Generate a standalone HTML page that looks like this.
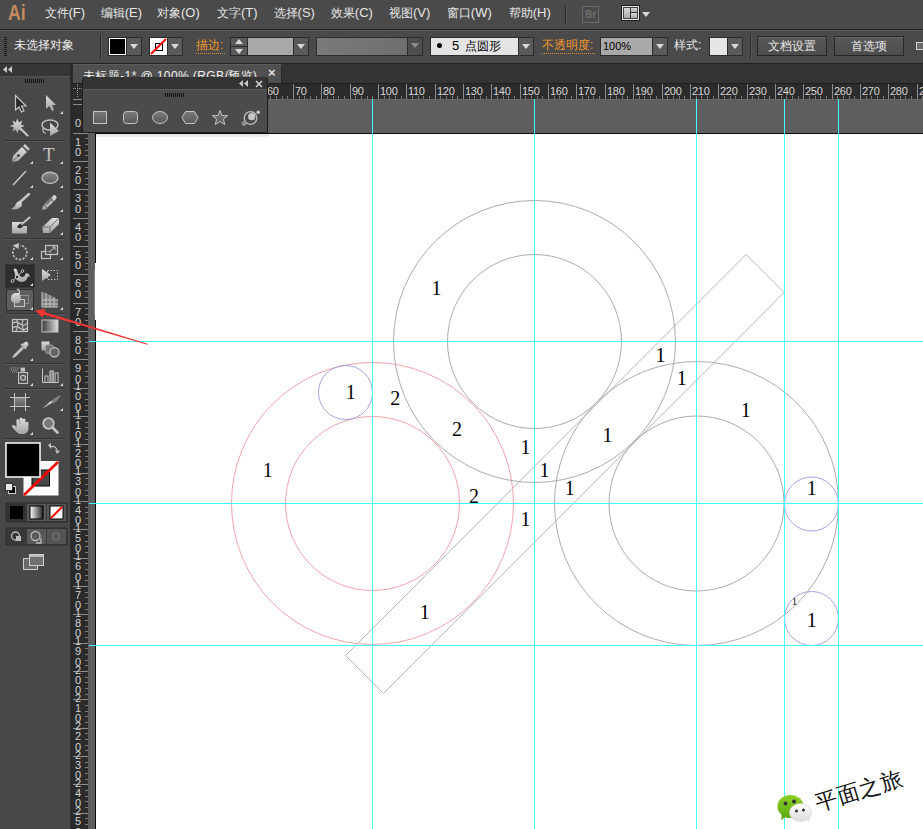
<!DOCTYPE html><html><head><meta charset="utf-8"><style>
html,body{margin:0;padding:0;width:923px;height:829px;overflow:hidden;background:#484848;font-family:"Liberation Sans",sans-serif;}
.ab{position:absolute;}
.mt{position:absolute;top:5px;font-size:12px;color:#e6e6e6;line-height:16px;white-space:nowrap;}
.ct{position:absolute;font-size:12px;line-height:16px;white-space:nowrap;}
.dd{position:absolute;top:37px;height:17px;width:14px;background:#5a5a5a;border:1px solid #2c2c2c;}
.dd:after{content:"";position:absolute;left:3px;top:6px;border-left:4px solid transparent;border-right:4px solid transparent;border-top:5px solid #d8d8d8;}
.tri{position:absolute;width:0;height:0;border-left:3px solid transparent;border-bottom:3px solid #d0d0d0;}
.sep{position:absolute;left:5px;width:60px;height:1px;background:#343434;border-bottom:1px solid #555;}
.btn{position:absolute;top:36px;height:18px;border:1px solid #262626;background:linear-gradient(#585858,#4c4c4c);box-shadow:inset 0 1px 0 #666;color:#e8e8e8;font-size:12px;line-height:19px;text-align:center;}
</style></head><body>
<div class="ab" style="left:0;top:0;width:923px;height:29px;background:#4a4a4a"></div>
<div class="ab" style="left:0;top:29px;width:923px;height:1px;background:#1f1f1f"></div>
<div class="ab" style="left:0;top:30px;width:923px;height:1px;background:#5d5d5d"></div>
<div class="ab" style="left:8px;top:1px;font-size:21.5px;font-weight:bold;color:#c48a5e;line-height:24px;letter-spacing:0px;transform:scaleX(0.82);transform-origin:0 0">Ai</div>
<div class="mt" style="left:44.5px">文件<span style="font-size:13px">(F)</span></div>
<div class="mt" style="left:100.7px">编辑<span style="font-size:13px">(E)</span></div>
<div class="mt" style="left:157px">对象<span style="font-size:13px">(O)</span></div>
<div class="mt" style="left:217px">文字<span style="font-size:13px">(T)</span></div>
<div class="mt" style="left:273.6px">选择<span style="font-size:13px">(S)</span></div>
<div class="mt" style="left:330.8px">效果<span style="font-size:13px">(C)</span></div>
<div class="mt" style="left:389px">视图<span style="font-size:13px">(V)</span></div>
<div class="mt" style="left:446.8px">窗口<span style="font-size:13px">(W)</span></div>
<div class="mt" style="left:508.7px">帮助<span style="font-size:13px">(H)</span></div>
<div class="ab" style="left:565px;top:5px;width:1px;height:19px;background:#2a2a2a;border-right:1px solid #5a5a5a"></div>
<div class="ab" style="left:582px;top:6px;width:15px;height:15px;border:1px solid #6a6a6a;color:#6e6e6e;font-size:10px;line-height:15px;text-align:center;font-weight:bold">Br</div>
<div class="ab" style="left:621px;top:5px;width:19px;height:16px;background:#1e1e1e"></div>
<div class="ab" style="left:622px;top:6px;width:17px;height:14px;background:#e4e4e4"></div>
<div class="ab" style="left:624px;top:8px;width:6px;height:10px;background:linear-gradient(#d8d8d8,#a8a8a8)"></div>
<div class="ab" style="left:631px;top:8px;width:6px;height:4px;background:linear-gradient(#d8d8d8,#b0b0b0)"></div>
<div class="ab" style="left:631px;top:13px;width:6px;height:5px;background:linear-gradient(#d8d8d8,#a8a8a8)"></div>
<div class="ab" style="left:630px;top:7px;width:1px;height:12px;background:#333"></div>
<div class="ab" style="left:631px;top:12px;width:7px;height:1px;background:#333"></div>
<div class="ab" style="left:623px;top:7px;width:15px;height:12px;box-shadow:inset 0 0 0 1px #444"></div>
<div class="ab" style="left:642px;top:12px;width:0;height:0;border-left:4px solid transparent;border-right:4px solid transparent;border-top:5px solid #d8d8d8"></div>
<div class="ab" style="left:0;top:31px;width:923px;height:32px;background:#4a4a4a"></div>
<div class="ab" style="left:0;top:63px;width:923px;height:1px;background:#1f1f1f"></div>
<div class="ab" style="left:4px;top:37px;width:3px;height:1px;background:#1a1a1a"></div>
<div class="ab" style="left:4px;top:39px;width:3px;height:1px;background:#1a1a1a"></div>
<div class="ab" style="left:4px;top:41px;width:3px;height:1px;background:#1a1a1a"></div>
<div class="ab" style="left:4px;top:43px;width:3px;height:1px;background:#1a1a1a"></div>
<div class="ab" style="left:4px;top:45px;width:3px;height:1px;background:#1a1a1a"></div>
<div class="ab" style="left:4px;top:47px;width:3px;height:1px;background:#1a1a1a"></div>
<div class="ab" style="left:4px;top:49px;width:3px;height:1px;background:#1a1a1a"></div>
<div class="ab" style="left:4px;top:51px;width:3px;height:1px;background:#1a1a1a"></div>
<div class="ab" style="left:4px;top:53px;width:3px;height:1px;background:#1a1a1a"></div>
<div class="ab" style="left:4px;top:55px;width:3px;height:1px;background:#1a1a1a"></div>
<div class="ct" style="left:14px;top:37px;color:#ececec">未选择对象</div>
<div class="ab" style="left:100px;top:34px;width:1px;height:25px;background:#2e2e2e;border-right:1px solid #5a5a5a"></div>
<div class="ab" style="left:108px;top:37px;width:17px;height:17px;background:#000;border:1px solid #2a2a2a;box-shadow:inset 0 0 0 1px #fff"></div>
<div class="dd" style="left:126px"></div>
<div class="ab" style="left:149px;top:37px;width:17px;height:17px;background:#fff;border:1px solid #2a2a2a;overflow:hidden"><div class="ab" style="left:5px;top:5px;width:6px;height:6px;border:1px solid #000"></div><svg class="ab" style="left:0;top:0" width="17" height="17"><line x1="1" y1="16" x2="16" y2="1" stroke="#f00" stroke-width="2"/></svg></div>
<div class="dd" style="left:167px"></div>
<div class="ct" style="left:196px;top:37px;color:#f4962a">描边:</div>
<div class="ab" style="left:196px;top:53px;width:29px;height:0;border-top:1px dotted #e08a2a"></div>
<div class="ab" style="left:230px;top:37px;width:77px;height:17px;border:1px solid #262626;background:#a8a8a8"></div>
<div class="ab" style="left:231px;top:38px;width:16px;height:8px;background:#5a5a5a;border-bottom:1px solid #2a2a2a"></div>
<div class="ab" style="left:231px;top:47px;width:16px;height:8px;background:#5a5a5a"></div>
<div class="ab" style="left:235px;top:39px;width:0;height:0;border-left:4px solid transparent;border-right:4px solid transparent;border-bottom:5px solid #d8d8d8"></div>
<div class="ab" style="left:235px;top:49px;width:0;height:0;border-left:4px solid transparent;border-right:4px solid transparent;border-top:5px solid #d8d8d8"></div>
<div class="ab" style="left:247px;top:38px;width:1px;height:17px;background:#2a2a2a"></div>
<div class="dd" style="left:293px"></div>
<div class="ab" style="left:316px;top:37px;width:90px;height:17px;border:1px solid #2c2c2c;background:linear-gradient(90deg,#7a7a7a,#6e6e6e)"></div>
<div class="ab" style="left:407px;top:37px;height:17px;width:14px;background:#4e4e4e;border:1px solid #2c2c2c"></div><div class="ab" style="left:411px;top:43px;width:0;height:0;border-left:4px solid transparent;border-right:4px solid transparent;border-top:5px solid #8a8a8a"></div>
<div class="ab" style="left:430px;top:37px;width:87px;height:17px;border:1px solid #2c2c2c;background:#e4e4e4"></div>
<div class="ab" style="left:437px;top:43px;width:5px;height:5px;border-radius:50%;background:#000"></div>
<div class="ct" style="left:452px;top:38px;color:#000;font-size:13px">5</div>
<div class="ct" style="left:465px;top:38px;color:#000;font-size:12px">点圆形</div>
<div class="dd" style="left:518px"></div>
<div class="ct" style="left:542px;top:37px;color:#f4962a">不透明度:</div>
<div class="ab" style="left:542px;top:53px;width:53px;height:0;border-top:1px dotted #e08a2a"></div>
<div class="ab" style="left:600px;top:37px;width:51px;height:17px;border:1px solid #2c2c2c;background:#a9a9a9"></div>
<div class="ct" style="left:603px;top:38px;color:#000;font-size:11px">100%</div>
<div class="dd" style="left:652px"></div>
<div class="ct" style="left:674px;top:37px;color:#e8e8e8">样式:</div>
<div class="ab" style="left:709px;top:37px;width:17px;height:17px;border:1px solid #2c2c2c;background:#e6e6e6"></div>
<div class="dd" style="left:727px"></div>
<div class="ab" style="left:750px;top:34px;width:1px;height:25px;background:#2e2e2e;border-right:1px solid #5a5a5a"></div>
<div class="btn" style="left:757px;width:68px">文档设置</div>
<div class="btn" style="left:834px;width:68px">首选项</div>
<div class="ab" style="left:916px;top:42px;width:9px;height:8px;border:1px solid #d0d0d0;background:#6a6a6a;box-sizing:border-box"></div>
<div class="ab" style="left:0;top:64px;width:70px;height:765px;background:#484848"></div>
<div class="ab" style="left:0;top:64px;width:70px;height:12px;background:#363636;border-bottom:1px solid #555"></div>
<div class="ab" style="left:70px;top:64px;width:3px;height:765px;background:#2a2a2a"></div>
<svg class="ab" style="left:3px;top:66px" width="10" height="8"><path d="M4 0 L0 3.5 L4 7 Z M9 0 L5 3.5 L9 7 Z" fill="#c8c8c8"/></svg>
<div class="ab" style="left:25px;top:79px;width:1px;height:4px;background:#111"></div>
<div class="ab" style="left:27px;top:79px;width:1px;height:4px;background:#111"></div>
<div class="ab" style="left:29px;top:79px;width:1px;height:4px;background:#111"></div>
<div class="ab" style="left:31px;top:79px;width:1px;height:4px;background:#111"></div>
<div class="ab" style="left:33px;top:79px;width:1px;height:4px;background:#111"></div>
<div class="ab" style="left:35px;top:79px;width:1px;height:4px;background:#111"></div>
<div class="ab" style="left:37px;top:79px;width:1px;height:4px;background:#111"></div>
<div class="ab" style="left:39px;top:79px;width:1px;height:4px;background:#111"></div>
<div class="ab" style="left:41px;top:79px;width:1px;height:4px;background:#111"></div>
<div class="ab" style="left:43px;top:79px;width:1px;height:4px;background:#111"></div>
<div class="ab" style="left:73px;top:64px;width:850px;height:19px;background:#343434"></div>
<div class="ab" style="left:73px;top:64px;width:209px;height:19px;background:#4f4f4f;border-top:1px solid #5c5c5c;border-right:1px solid #2a2a2a;box-sizing:border-box"></div>
<div class="ct" style="left:83px;top:68px;color:#f0f0f0;letter-spacing:0.4px">未标题-1* @ 100% (RGB/预览)</div>
<div class="ab" style="left:268px;top:66px;color:#e0e0e0;font-size:13px;font-weight:bold;line-height:14px">×</div>
<div class="ab" style="left:73px;top:83px;width:850px;height:16px;background:#2b2b2b;border-top:1px solid #1e1e1e;box-sizing:border-box"></div>
<div class="ab" style="left:73px;top:99px;width:15px;height:730px;background:#2b2b2b"></div>
<div class="ab" style="left:88px;top:99px;width:835px;height:34px;background:#5e5e5e;border-top:1px solid #686868;box-sizing:border-box"></div>
<div class="ab" style="left:88px;top:133px;width:7px;height:696px;background:#5e5e5e"></div>
<div class="ab" style="left:95px;top:133px;width:828px;height:696px;background:#0c0c0c"></div>
<div class="ab" style="left:96px;top:134px;width:827px;height:695px;background:#ffffff"></div>
<div class="ab" style="left:96px;top:134px;width:173px;height:4px;background:linear-gradient(#dcdcdc,#ffffff)"></div>
<div class="ab" style="left:95px;top:263px;width:1px;height:57px;background:#fff"></div><div class="ab" style="left:94px;top:270px;width:1px;height:45px;background:#8a8a8a"></div>
<div class="ab" style="left:89px;top:96px;width:1px;height:3px;background:#7a7a7a"></div>
<div class="ab" style="left:95px;top:84px;width:1px;height:15px;background:#8c8c8c"></div>
<div class="ab" style="left:97px;top:85px;font-size:11px;line-height:13px;color:#d6d6d6;letter-spacing:-0.3px">0</div>
<div class="ab" style="left:100px;top:96px;width:1px;height:3px;background:#7a7a7a"></div>
<div class="ab" style="left:106px;top:96px;width:1px;height:3px;background:#7a7a7a"></div>
<div class="ab" style="left:112px;top:96px;width:1px;height:3px;background:#7a7a7a"></div>
<div class="ab" style="left:117px;top:96px;width:1px;height:3px;background:#7a7a7a"></div>
<div class="ab" style="left:123px;top:84px;width:1px;height:15px;background:#8c8c8c"></div>
<div class="ab" style="left:125px;top:85px;font-size:11px;line-height:13px;color:#d6d6d6;letter-spacing:-0.3px">10</div>
<div class="ab" style="left:129px;top:96px;width:1px;height:3px;background:#7a7a7a"></div>
<div class="ab" style="left:134px;top:96px;width:1px;height:3px;background:#7a7a7a"></div>
<div class="ab" style="left:140px;top:96px;width:1px;height:3px;background:#7a7a7a"></div>
<div class="ab" style="left:146px;top:96px;width:1px;height:3px;background:#7a7a7a"></div>
<div class="ab" style="left:151px;top:84px;width:1px;height:15px;background:#8c8c8c"></div>
<div class="ab" style="left:153px;top:85px;font-size:11px;line-height:13px;color:#d6d6d6;letter-spacing:-0.3px">20</div>
<div class="ab" style="left:157px;top:96px;width:1px;height:3px;background:#7a7a7a"></div>
<div class="ab" style="left:163px;top:96px;width:1px;height:3px;background:#7a7a7a"></div>
<div class="ab" style="left:168px;top:96px;width:1px;height:3px;background:#7a7a7a"></div>
<div class="ab" style="left:174px;top:96px;width:1px;height:3px;background:#7a7a7a"></div>
<div class="ab" style="left:180px;top:84px;width:1px;height:15px;background:#8c8c8c"></div>
<div class="ab" style="left:182px;top:85px;font-size:11px;line-height:13px;color:#d6d6d6;letter-spacing:-0.3px">30</div>
<div class="ab" style="left:185px;top:96px;width:1px;height:3px;background:#7a7a7a"></div>
<div class="ab" style="left:191px;top:96px;width:1px;height:3px;background:#7a7a7a"></div>
<div class="ab" style="left:197px;top:96px;width:1px;height:3px;background:#7a7a7a"></div>
<div class="ab" style="left:202px;top:96px;width:1px;height:3px;background:#7a7a7a"></div>
<div class="ab" style="left:208px;top:84px;width:1px;height:15px;background:#8c8c8c"></div>
<div class="ab" style="left:210px;top:85px;font-size:11px;line-height:13px;color:#d6d6d6;letter-spacing:-0.3px">40</div>
<div class="ab" style="left:214px;top:96px;width:1px;height:3px;background:#7a7a7a"></div>
<div class="ab" style="left:219px;top:96px;width:1px;height:3px;background:#7a7a7a"></div>
<div class="ab" style="left:225px;top:96px;width:1px;height:3px;background:#7a7a7a"></div>
<div class="ab" style="left:231px;top:96px;width:1px;height:3px;background:#7a7a7a"></div>
<div class="ab" style="left:236px;top:84px;width:1px;height:15px;background:#8c8c8c"></div>
<div class="ab" style="left:238px;top:85px;font-size:11px;line-height:13px;color:#d6d6d6;letter-spacing:-0.3px">50</div>
<div class="ab" style="left:242px;top:96px;width:1px;height:3px;background:#7a7a7a"></div>
<div class="ab" style="left:248px;top:96px;width:1px;height:3px;background:#7a7a7a"></div>
<div class="ab" style="left:253px;top:96px;width:1px;height:3px;background:#7a7a7a"></div>
<div class="ab" style="left:259px;top:96px;width:1px;height:3px;background:#7a7a7a"></div>
<div class="ab" style="left:265px;top:84px;width:1px;height:15px;background:#8c8c8c"></div>
<div class="ab" style="left:267px;top:85px;font-size:11px;line-height:13px;color:#d6d6d6;letter-spacing:-0.3px">60</div>
<div class="ab" style="left:270px;top:96px;width:1px;height:3px;background:#7a7a7a"></div>
<div class="ab" style="left:276px;top:96px;width:1px;height:3px;background:#7a7a7a"></div>
<div class="ab" style="left:282px;top:96px;width:1px;height:3px;background:#7a7a7a"></div>
<div class="ab" style="left:287px;top:96px;width:1px;height:3px;background:#7a7a7a"></div>
<div class="ab" style="left:293px;top:84px;width:1px;height:15px;background:#8c8c8c"></div>
<div class="ab" style="left:295px;top:85px;font-size:11px;line-height:13px;color:#d6d6d6;letter-spacing:-0.3px">70</div>
<div class="ab" style="left:299px;top:96px;width:1px;height:3px;background:#7a7a7a"></div>
<div class="ab" style="left:304px;top:96px;width:1px;height:3px;background:#7a7a7a"></div>
<div class="ab" style="left:310px;top:96px;width:1px;height:3px;background:#7a7a7a"></div>
<div class="ab" style="left:316px;top:96px;width:1px;height:3px;background:#7a7a7a"></div>
<div class="ab" style="left:321px;top:84px;width:1px;height:15px;background:#8c8c8c"></div>
<div class="ab" style="left:323px;top:85px;font-size:11px;line-height:13px;color:#d6d6d6;letter-spacing:-0.3px">80</div>
<div class="ab" style="left:327px;top:96px;width:1px;height:3px;background:#7a7a7a"></div>
<div class="ab" style="left:333px;top:96px;width:1px;height:3px;background:#7a7a7a"></div>
<div class="ab" style="left:338px;top:96px;width:1px;height:3px;background:#7a7a7a"></div>
<div class="ab" style="left:344px;top:96px;width:1px;height:3px;background:#7a7a7a"></div>
<div class="ab" style="left:350px;top:84px;width:1px;height:15px;background:#8c8c8c"></div>
<div class="ab" style="left:352px;top:85px;font-size:11px;line-height:13px;color:#d6d6d6;letter-spacing:-0.3px">90</div>
<div class="ab" style="left:355px;top:96px;width:1px;height:3px;background:#7a7a7a"></div>
<div class="ab" style="left:361px;top:96px;width:1px;height:3px;background:#7a7a7a"></div>
<div class="ab" style="left:367px;top:96px;width:1px;height:3px;background:#7a7a7a"></div>
<div class="ab" style="left:372px;top:96px;width:1px;height:3px;background:#7a7a7a"></div>
<div class="ab" style="left:378px;top:84px;width:1px;height:15px;background:#8c8c8c"></div>
<div class="ab" style="left:380px;top:85px;font-size:11px;line-height:13px;color:#d6d6d6;letter-spacing:-0.3px">100</div>
<div class="ab" style="left:384px;top:96px;width:1px;height:3px;background:#7a7a7a"></div>
<div class="ab" style="left:389px;top:96px;width:1px;height:3px;background:#7a7a7a"></div>
<div class="ab" style="left:395px;top:96px;width:1px;height:3px;background:#7a7a7a"></div>
<div class="ab" style="left:401px;top:96px;width:1px;height:3px;background:#7a7a7a"></div>
<div class="ab" style="left:406px;top:84px;width:1px;height:15px;background:#8c8c8c"></div>
<div class="ab" style="left:408px;top:85px;font-size:11px;line-height:13px;color:#d6d6d6;letter-spacing:-0.3px">110</div>
<div class="ab" style="left:412px;top:96px;width:1px;height:3px;background:#7a7a7a"></div>
<div class="ab" style="left:418px;top:96px;width:1px;height:3px;background:#7a7a7a"></div>
<div class="ab" style="left:423px;top:96px;width:1px;height:3px;background:#7a7a7a"></div>
<div class="ab" style="left:429px;top:96px;width:1px;height:3px;background:#7a7a7a"></div>
<div class="ab" style="left:435px;top:84px;width:1px;height:15px;background:#8c8c8c"></div>
<div class="ab" style="left:437px;top:85px;font-size:11px;line-height:13px;color:#d6d6d6;letter-spacing:-0.3px">120</div>
<div class="ab" style="left:440px;top:96px;width:1px;height:3px;background:#7a7a7a"></div>
<div class="ab" style="left:446px;top:96px;width:1px;height:3px;background:#7a7a7a"></div>
<div class="ab" style="left:452px;top:96px;width:1px;height:3px;background:#7a7a7a"></div>
<div class="ab" style="left:457px;top:96px;width:1px;height:3px;background:#7a7a7a"></div>
<div class="ab" style="left:463px;top:84px;width:1px;height:15px;background:#8c8c8c"></div>
<div class="ab" style="left:465px;top:85px;font-size:11px;line-height:13px;color:#d6d6d6;letter-spacing:-0.3px">130</div>
<div class="ab" style="left:469px;top:96px;width:1px;height:3px;background:#7a7a7a"></div>
<div class="ab" style="left:474px;top:96px;width:1px;height:3px;background:#7a7a7a"></div>
<div class="ab" style="left:480px;top:96px;width:1px;height:3px;background:#7a7a7a"></div>
<div class="ab" style="left:486px;top:96px;width:1px;height:3px;background:#7a7a7a"></div>
<div class="ab" style="left:491px;top:84px;width:1px;height:15px;background:#8c8c8c"></div>
<div class="ab" style="left:493px;top:85px;font-size:11px;line-height:13px;color:#d6d6d6;letter-spacing:-0.3px">140</div>
<div class="ab" style="left:497px;top:96px;width:1px;height:3px;background:#7a7a7a"></div>
<div class="ab" style="left:503px;top:96px;width:1px;height:3px;background:#7a7a7a"></div>
<div class="ab" style="left:508px;top:96px;width:1px;height:3px;background:#7a7a7a"></div>
<div class="ab" style="left:514px;top:96px;width:1px;height:3px;background:#7a7a7a"></div>
<div class="ab" style="left:520px;top:84px;width:1px;height:15px;background:#8c8c8c"></div>
<div class="ab" style="left:522px;top:85px;font-size:11px;line-height:13px;color:#d6d6d6;letter-spacing:-0.3px">150</div>
<div class="ab" style="left:525px;top:96px;width:1px;height:3px;background:#7a7a7a"></div>
<div class="ab" style="left:531px;top:96px;width:1px;height:3px;background:#7a7a7a"></div>
<div class="ab" style="left:537px;top:96px;width:1px;height:3px;background:#7a7a7a"></div>
<div class="ab" style="left:542px;top:96px;width:1px;height:3px;background:#7a7a7a"></div>
<div class="ab" style="left:548px;top:84px;width:1px;height:15px;background:#8c8c8c"></div>
<div class="ab" style="left:550px;top:85px;font-size:11px;line-height:13px;color:#d6d6d6;letter-spacing:-0.3px">160</div>
<div class="ab" style="left:554px;top:96px;width:1px;height:3px;background:#7a7a7a"></div>
<div class="ab" style="left:559px;top:96px;width:1px;height:3px;background:#7a7a7a"></div>
<div class="ab" style="left:565px;top:96px;width:1px;height:3px;background:#7a7a7a"></div>
<div class="ab" style="left:571px;top:96px;width:1px;height:3px;background:#7a7a7a"></div>
<div class="ab" style="left:576px;top:84px;width:1px;height:15px;background:#8c8c8c"></div>
<div class="ab" style="left:578px;top:85px;font-size:11px;line-height:13px;color:#d6d6d6;letter-spacing:-0.3px">170</div>
<div class="ab" style="left:582px;top:96px;width:1px;height:3px;background:#7a7a7a"></div>
<div class="ab" style="left:588px;top:96px;width:1px;height:3px;background:#7a7a7a"></div>
<div class="ab" style="left:593px;top:96px;width:1px;height:3px;background:#7a7a7a"></div>
<div class="ab" style="left:599px;top:96px;width:1px;height:3px;background:#7a7a7a"></div>
<div class="ab" style="left:605px;top:84px;width:1px;height:15px;background:#8c8c8c"></div>
<div class="ab" style="left:607px;top:85px;font-size:11px;line-height:13px;color:#d6d6d6;letter-spacing:-0.3px">180</div>
<div class="ab" style="left:610px;top:96px;width:1px;height:3px;background:#7a7a7a"></div>
<div class="ab" style="left:616px;top:96px;width:1px;height:3px;background:#7a7a7a"></div>
<div class="ab" style="left:622px;top:96px;width:1px;height:3px;background:#7a7a7a"></div>
<div class="ab" style="left:627px;top:96px;width:1px;height:3px;background:#7a7a7a"></div>
<div class="ab" style="left:633px;top:84px;width:1px;height:15px;background:#8c8c8c"></div>
<div class="ab" style="left:635px;top:85px;font-size:11px;line-height:13px;color:#d6d6d6;letter-spacing:-0.3px">190</div>
<div class="ab" style="left:639px;top:96px;width:1px;height:3px;background:#7a7a7a"></div>
<div class="ab" style="left:644px;top:96px;width:1px;height:3px;background:#7a7a7a"></div>
<div class="ab" style="left:650px;top:96px;width:1px;height:3px;background:#7a7a7a"></div>
<div class="ab" style="left:656px;top:96px;width:1px;height:3px;background:#7a7a7a"></div>
<div class="ab" style="left:662px;top:84px;width:1px;height:15px;background:#8c8c8c"></div>
<div class="ab" style="left:664px;top:85px;font-size:11px;line-height:13px;color:#d6d6d6;letter-spacing:-0.3px">200</div>
<div class="ab" style="left:667px;top:96px;width:1px;height:3px;background:#7a7a7a"></div>
<div class="ab" style="left:673px;top:96px;width:1px;height:3px;background:#7a7a7a"></div>
<div class="ab" style="left:679px;top:96px;width:1px;height:3px;background:#7a7a7a"></div>
<div class="ab" style="left:684px;top:96px;width:1px;height:3px;background:#7a7a7a"></div>
<div class="ab" style="left:690px;top:84px;width:1px;height:15px;background:#8c8c8c"></div>
<div class="ab" style="left:692px;top:85px;font-size:11px;line-height:13px;color:#d6d6d6;letter-spacing:-0.3px">210</div>
<div class="ab" style="left:696px;top:96px;width:1px;height:3px;background:#7a7a7a"></div>
<div class="ab" style="left:701px;top:96px;width:1px;height:3px;background:#7a7a7a"></div>
<div class="ab" style="left:707px;top:96px;width:1px;height:3px;background:#7a7a7a"></div>
<div class="ab" style="left:713px;top:96px;width:1px;height:3px;background:#7a7a7a"></div>
<div class="ab" style="left:718px;top:84px;width:1px;height:15px;background:#8c8c8c"></div>
<div class="ab" style="left:720px;top:85px;font-size:11px;line-height:13px;color:#d6d6d6;letter-spacing:-0.3px">220</div>
<div class="ab" style="left:724px;top:96px;width:1px;height:3px;background:#7a7a7a"></div>
<div class="ab" style="left:730px;top:96px;width:1px;height:3px;background:#7a7a7a"></div>
<div class="ab" style="left:735px;top:96px;width:1px;height:3px;background:#7a7a7a"></div>
<div class="ab" style="left:741px;top:96px;width:1px;height:3px;background:#7a7a7a"></div>
<div class="ab" style="left:747px;top:84px;width:1px;height:15px;background:#8c8c8c"></div>
<div class="ab" style="left:749px;top:85px;font-size:11px;line-height:13px;color:#d6d6d6;letter-spacing:-0.3px">230</div>
<div class="ab" style="left:752px;top:96px;width:1px;height:3px;background:#7a7a7a"></div>
<div class="ab" style="left:758px;top:96px;width:1px;height:3px;background:#7a7a7a"></div>
<div class="ab" style="left:764px;top:96px;width:1px;height:3px;background:#7a7a7a"></div>
<div class="ab" style="left:769px;top:96px;width:1px;height:3px;background:#7a7a7a"></div>
<div class="ab" style="left:775px;top:84px;width:1px;height:15px;background:#8c8c8c"></div>
<div class="ab" style="left:777px;top:85px;font-size:11px;line-height:13px;color:#d6d6d6;letter-spacing:-0.3px">240</div>
<div class="ab" style="left:781px;top:96px;width:1px;height:3px;background:#7a7a7a"></div>
<div class="ab" style="left:786px;top:96px;width:1px;height:3px;background:#7a7a7a"></div>
<div class="ab" style="left:792px;top:96px;width:1px;height:3px;background:#7a7a7a"></div>
<div class="ab" style="left:798px;top:96px;width:1px;height:3px;background:#7a7a7a"></div>
<div class="ab" style="left:803px;top:84px;width:1px;height:15px;background:#8c8c8c"></div>
<div class="ab" style="left:805px;top:85px;font-size:11px;line-height:13px;color:#d6d6d6;letter-spacing:-0.3px">250</div>
<div class="ab" style="left:809px;top:96px;width:1px;height:3px;background:#7a7a7a"></div>
<div class="ab" style="left:815px;top:96px;width:1px;height:3px;background:#7a7a7a"></div>
<div class="ab" style="left:820px;top:96px;width:1px;height:3px;background:#7a7a7a"></div>
<div class="ab" style="left:826px;top:96px;width:1px;height:3px;background:#7a7a7a"></div>
<div class="ab" style="left:832px;top:84px;width:1px;height:15px;background:#8c8c8c"></div>
<div class="ab" style="left:834px;top:85px;font-size:11px;line-height:13px;color:#d6d6d6;letter-spacing:-0.3px">260</div>
<div class="ab" style="left:837px;top:96px;width:1px;height:3px;background:#7a7a7a"></div>
<div class="ab" style="left:843px;top:96px;width:1px;height:3px;background:#7a7a7a"></div>
<div class="ab" style="left:849px;top:96px;width:1px;height:3px;background:#7a7a7a"></div>
<div class="ab" style="left:854px;top:96px;width:1px;height:3px;background:#7a7a7a"></div>
<div class="ab" style="left:860px;top:84px;width:1px;height:15px;background:#8c8c8c"></div>
<div class="ab" style="left:862px;top:85px;font-size:11px;line-height:13px;color:#d6d6d6;letter-spacing:-0.3px">270</div>
<div class="ab" style="left:866px;top:96px;width:1px;height:3px;background:#7a7a7a"></div>
<div class="ab" style="left:871px;top:96px;width:1px;height:3px;background:#7a7a7a"></div>
<div class="ab" style="left:877px;top:96px;width:1px;height:3px;background:#7a7a7a"></div>
<div class="ab" style="left:883px;top:96px;width:1px;height:3px;background:#7a7a7a"></div>
<div class="ab" style="left:888px;top:84px;width:1px;height:15px;background:#8c8c8c"></div>
<div class="ab" style="left:890px;top:85px;font-size:11px;line-height:13px;color:#d6d6d6;letter-spacing:-0.3px">280</div>
<div class="ab" style="left:894px;top:96px;width:1px;height:3px;background:#7a7a7a"></div>
<div class="ab" style="left:900px;top:96px;width:1px;height:3px;background:#7a7a7a"></div>
<div class="ab" style="left:905px;top:96px;width:1px;height:3px;background:#7a7a7a"></div>
<div class="ab" style="left:911px;top:96px;width:1px;height:3px;background:#7a7a7a"></div>
<div class="ab" style="left:917px;top:84px;width:1px;height:15px;background:#8c8c8c"></div>
<div class="ab" style="left:919px;top:85px;font-size:11px;line-height:13px;color:#d6d6d6;letter-spacing:-0.3px">290</div>
<div class="ab" style="left:922px;top:96px;width:1px;height:3px;background:#7a7a7a"></div>
<div class="ab" style="left:85px;top:99px;width:3px;height:1px;background:#7a7a7a"></div>
<div class="ab" style="left:73px;top:104px;width:15px;height:1px;background:#8c8c8c"></div>
<div class="ab" style="left:85px;top:110px;width:3px;height:1px;background:#7a7a7a"></div>
<div class="ab" style="left:85px;top:116px;width:3px;height:1px;background:#7a7a7a"></div>
<div class="ab" style="left:85px;top:121px;width:3px;height:1px;background:#7a7a7a"></div>
<div class="ab" style="left:85px;top:127px;width:3px;height:1px;background:#7a7a7a"></div>
<div class="ab" style="left:73px;top:133px;width:15px;height:1px;background:#8c8c8c"></div>
<div class="ab" style="left:85px;top:138px;width:3px;height:1px;background:#7a7a7a"></div>
<div class="ab" style="left:85px;top:144px;width:3px;height:1px;background:#7a7a7a"></div>
<div class="ab" style="left:85px;top:150px;width:3px;height:1px;background:#7a7a7a"></div>
<div class="ab" style="left:85px;top:155px;width:3px;height:1px;background:#7a7a7a"></div>
<div class="ab" style="left:73px;top:161px;width:15px;height:1px;background:#8c8c8c"></div>
<div class="ab" style="left:85px;top:167px;width:3px;height:1px;background:#7a7a7a"></div>
<div class="ab" style="left:85px;top:172px;width:3px;height:1px;background:#7a7a7a"></div>
<div class="ab" style="left:85px;top:178px;width:3px;height:1px;background:#7a7a7a"></div>
<div class="ab" style="left:85px;top:184px;width:3px;height:1px;background:#7a7a7a"></div>
<div class="ab" style="left:73px;top:189px;width:15px;height:1px;background:#8c8c8c"></div>
<div class="ab" style="left:85px;top:195px;width:3px;height:1px;background:#7a7a7a"></div>
<div class="ab" style="left:85px;top:201px;width:3px;height:1px;background:#7a7a7a"></div>
<div class="ab" style="left:85px;top:206px;width:3px;height:1px;background:#7a7a7a"></div>
<div class="ab" style="left:85px;top:212px;width:3px;height:1px;background:#7a7a7a"></div>
<div class="ab" style="left:73px;top:218px;width:15px;height:1px;background:#8c8c8c"></div>
<div class="ab" style="left:85px;top:223px;width:3px;height:1px;background:#7a7a7a"></div>
<div class="ab" style="left:85px;top:229px;width:3px;height:1px;background:#7a7a7a"></div>
<div class="ab" style="left:85px;top:235px;width:3px;height:1px;background:#7a7a7a"></div>
<div class="ab" style="left:85px;top:240px;width:3px;height:1px;background:#7a7a7a"></div>
<div class="ab" style="left:73px;top:246px;width:15px;height:1px;background:#8c8c8c"></div>
<div class="ab" style="left:85px;top:252px;width:3px;height:1px;background:#7a7a7a"></div>
<div class="ab" style="left:85px;top:257px;width:3px;height:1px;background:#7a7a7a"></div>
<div class="ab" style="left:85px;top:263px;width:3px;height:1px;background:#7a7a7a"></div>
<div class="ab" style="left:85px;top:269px;width:3px;height:1px;background:#7a7a7a"></div>
<div class="ab" style="left:73px;top:274px;width:15px;height:1px;background:#8c8c8c"></div>
<div class="ab" style="left:85px;top:280px;width:3px;height:1px;background:#7a7a7a"></div>
<div class="ab" style="left:85px;top:286px;width:3px;height:1px;background:#7a7a7a"></div>
<div class="ab" style="left:85px;top:291px;width:3px;height:1px;background:#7a7a7a"></div>
<div class="ab" style="left:85px;top:297px;width:3px;height:1px;background:#7a7a7a"></div>
<div class="ab" style="left:73px;top:303px;width:15px;height:1px;background:#8c8c8c"></div>
<div class="ab" style="left:85px;top:308px;width:3px;height:1px;background:#7a7a7a"></div>
<div class="ab" style="left:85px;top:314px;width:3px;height:1px;background:#7a7a7a"></div>
<div class="ab" style="left:85px;top:320px;width:3px;height:1px;background:#7a7a7a"></div>
<div class="ab" style="left:85px;top:325px;width:3px;height:1px;background:#7a7a7a"></div>
<div class="ab" style="left:73px;top:331px;width:15px;height:1px;background:#8c8c8c"></div>
<div class="ab" style="left:85px;top:337px;width:3px;height:1px;background:#7a7a7a"></div>
<div class="ab" style="left:85px;top:342px;width:3px;height:1px;background:#7a7a7a"></div>
<div class="ab" style="left:85px;top:348px;width:3px;height:1px;background:#7a7a7a"></div>
<div class="ab" style="left:85px;top:354px;width:3px;height:1px;background:#7a7a7a"></div>
<div class="ab" style="left:73px;top:359px;width:15px;height:1px;background:#8c8c8c"></div>
<div class="ab" style="left:85px;top:365px;width:3px;height:1px;background:#7a7a7a"></div>
<div class="ab" style="left:85px;top:371px;width:3px;height:1px;background:#7a7a7a"></div>
<div class="ab" style="left:85px;top:376px;width:3px;height:1px;background:#7a7a7a"></div>
<div class="ab" style="left:85px;top:382px;width:3px;height:1px;background:#7a7a7a"></div>
<div class="ab" style="left:73px;top:388px;width:15px;height:1px;background:#8c8c8c"></div>
<div class="ab" style="left:85px;top:393px;width:3px;height:1px;background:#7a7a7a"></div>
<div class="ab" style="left:85px;top:399px;width:3px;height:1px;background:#7a7a7a"></div>
<div class="ab" style="left:85px;top:405px;width:3px;height:1px;background:#7a7a7a"></div>
<div class="ab" style="left:85px;top:410px;width:3px;height:1px;background:#7a7a7a"></div>
<div class="ab" style="left:73px;top:416px;width:15px;height:1px;background:#8c8c8c"></div>
<div class="ab" style="left:85px;top:422px;width:3px;height:1px;background:#7a7a7a"></div>
<div class="ab" style="left:85px;top:427px;width:3px;height:1px;background:#7a7a7a"></div>
<div class="ab" style="left:85px;top:433px;width:3px;height:1px;background:#7a7a7a"></div>
<div class="ab" style="left:85px;top:439px;width:3px;height:1px;background:#7a7a7a"></div>
<div class="ab" style="left:73px;top:444px;width:15px;height:1px;background:#8c8c8c"></div>
<div class="ab" style="left:85px;top:450px;width:3px;height:1px;background:#7a7a7a"></div>
<div class="ab" style="left:85px;top:456px;width:3px;height:1px;background:#7a7a7a"></div>
<div class="ab" style="left:85px;top:461px;width:3px;height:1px;background:#7a7a7a"></div>
<div class="ab" style="left:85px;top:467px;width:3px;height:1px;background:#7a7a7a"></div>
<div class="ab" style="left:73px;top:473px;width:15px;height:1px;background:#8c8c8c"></div>
<div class="ab" style="left:85px;top:478px;width:3px;height:1px;background:#7a7a7a"></div>
<div class="ab" style="left:85px;top:484px;width:3px;height:1px;background:#7a7a7a"></div>
<div class="ab" style="left:85px;top:490px;width:3px;height:1px;background:#7a7a7a"></div>
<div class="ab" style="left:85px;top:495px;width:3px;height:1px;background:#7a7a7a"></div>
<div class="ab" style="left:73px;top:501px;width:15px;height:1px;background:#8c8c8c"></div>
<div class="ab" style="left:85px;top:507px;width:3px;height:1px;background:#7a7a7a"></div>
<div class="ab" style="left:85px;top:512px;width:3px;height:1px;background:#7a7a7a"></div>
<div class="ab" style="left:85px;top:518px;width:3px;height:1px;background:#7a7a7a"></div>
<div class="ab" style="left:85px;top:524px;width:3px;height:1px;background:#7a7a7a"></div>
<div class="ab" style="left:73px;top:529px;width:15px;height:1px;background:#8c8c8c"></div>
<div class="ab" style="left:85px;top:535px;width:3px;height:1px;background:#7a7a7a"></div>
<div class="ab" style="left:85px;top:541px;width:3px;height:1px;background:#7a7a7a"></div>
<div class="ab" style="left:85px;top:546px;width:3px;height:1px;background:#7a7a7a"></div>
<div class="ab" style="left:85px;top:552px;width:3px;height:1px;background:#7a7a7a"></div>
<div class="ab" style="left:73px;top:558px;width:15px;height:1px;background:#8c8c8c"></div>
<div class="ab" style="left:85px;top:563px;width:3px;height:1px;background:#7a7a7a"></div>
<div class="ab" style="left:85px;top:569px;width:3px;height:1px;background:#7a7a7a"></div>
<div class="ab" style="left:85px;top:575px;width:3px;height:1px;background:#7a7a7a"></div>
<div class="ab" style="left:85px;top:580px;width:3px;height:1px;background:#7a7a7a"></div>
<div class="ab" style="left:73px;top:586px;width:15px;height:1px;background:#8c8c8c"></div>
<div class="ab" style="left:85px;top:592px;width:3px;height:1px;background:#7a7a7a"></div>
<div class="ab" style="left:85px;top:597px;width:3px;height:1px;background:#7a7a7a"></div>
<div class="ab" style="left:85px;top:603px;width:3px;height:1px;background:#7a7a7a"></div>
<div class="ab" style="left:85px;top:609px;width:3px;height:1px;background:#7a7a7a"></div>
<div class="ab" style="left:73px;top:614px;width:15px;height:1px;background:#8c8c8c"></div>
<div class="ab" style="left:85px;top:620px;width:3px;height:1px;background:#7a7a7a"></div>
<div class="ab" style="left:85px;top:626px;width:3px;height:1px;background:#7a7a7a"></div>
<div class="ab" style="left:85px;top:631px;width:3px;height:1px;background:#7a7a7a"></div>
<div class="ab" style="left:85px;top:637px;width:3px;height:1px;background:#7a7a7a"></div>
<div class="ab" style="left:73px;top:643px;width:15px;height:1px;background:#8c8c8c"></div>
<div class="ab" style="left:85px;top:648px;width:3px;height:1px;background:#7a7a7a"></div>
<div class="ab" style="left:85px;top:654px;width:3px;height:1px;background:#7a7a7a"></div>
<div class="ab" style="left:85px;top:660px;width:3px;height:1px;background:#7a7a7a"></div>
<div class="ab" style="left:85px;top:665px;width:3px;height:1px;background:#7a7a7a"></div>
<div class="ab" style="left:73px;top:671px;width:15px;height:1px;background:#8c8c8c"></div>
<div class="ab" style="left:85px;top:677px;width:3px;height:1px;background:#7a7a7a"></div>
<div class="ab" style="left:85px;top:682px;width:3px;height:1px;background:#7a7a7a"></div>
<div class="ab" style="left:85px;top:688px;width:3px;height:1px;background:#7a7a7a"></div>
<div class="ab" style="left:85px;top:694px;width:3px;height:1px;background:#7a7a7a"></div>
<div class="ab" style="left:73px;top:699px;width:15px;height:1px;background:#8c8c8c"></div>
<div class="ab" style="left:85px;top:705px;width:3px;height:1px;background:#7a7a7a"></div>
<div class="ab" style="left:85px;top:711px;width:3px;height:1px;background:#7a7a7a"></div>
<div class="ab" style="left:85px;top:716px;width:3px;height:1px;background:#7a7a7a"></div>
<div class="ab" style="left:85px;top:722px;width:3px;height:1px;background:#7a7a7a"></div>
<div class="ab" style="left:73px;top:728px;width:15px;height:1px;background:#8c8c8c"></div>
<div class="ab" style="left:85px;top:733px;width:3px;height:1px;background:#7a7a7a"></div>
<div class="ab" style="left:85px;top:739px;width:3px;height:1px;background:#7a7a7a"></div>
<div class="ab" style="left:85px;top:745px;width:3px;height:1px;background:#7a7a7a"></div>
<div class="ab" style="left:85px;top:750px;width:3px;height:1px;background:#7a7a7a"></div>
<div class="ab" style="left:73px;top:756px;width:15px;height:1px;background:#8c8c8c"></div>
<div class="ab" style="left:85px;top:762px;width:3px;height:1px;background:#7a7a7a"></div>
<div class="ab" style="left:85px;top:767px;width:3px;height:1px;background:#7a7a7a"></div>
<div class="ab" style="left:85px;top:773px;width:3px;height:1px;background:#7a7a7a"></div>
<div class="ab" style="left:85px;top:779px;width:3px;height:1px;background:#7a7a7a"></div>
<div class="ab" style="left:73px;top:784px;width:15px;height:1px;background:#8c8c8c"></div>
<div class="ab" style="left:85px;top:790px;width:3px;height:1px;background:#7a7a7a"></div>
<div class="ab" style="left:85px;top:796px;width:3px;height:1px;background:#7a7a7a"></div>
<div class="ab" style="left:85px;top:801px;width:3px;height:1px;background:#7a7a7a"></div>
<div class="ab" style="left:85px;top:807px;width:3px;height:1px;background:#7a7a7a"></div>
<div class="ab" style="left:73px;top:813px;width:15px;height:1px;background:#8c8c8c"></div>
<div class="ab" style="left:85px;top:818px;width:3px;height:1px;background:#7a7a7a"></div>
<div class="ab" style="left:85px;top:824px;width:3px;height:1px;background:#7a7a7a"></div>
<div class="ab" style="left:75px;top:118.0px;font-size:11px;line-height:10px;color:#d2d2d2">0</div>
<div class="ab" style="left:75px;top:136.7px;font-size:11px;line-height:10px;color:#d2d2d2">1</div>
<div class="ab" style="left:75px;top:146.9px;font-size:11px;line-height:10px;color:#d2d2d2">0</div>
<div class="ab" style="left:75px;top:165.1px;font-size:11px;line-height:10px;color:#d2d2d2">2</div>
<div class="ab" style="left:75px;top:175.3px;font-size:11px;line-height:10px;color:#d2d2d2">0</div>
<div class="ab" style="left:75px;top:193.4px;font-size:11px;line-height:10px;color:#d2d2d2">3</div>
<div class="ab" style="left:75px;top:203.6px;font-size:11px;line-height:10px;color:#d2d2d2">0</div>
<div class="ab" style="left:75px;top:221.7px;font-size:11px;line-height:10px;color:#d2d2d2">4</div>
<div class="ab" style="left:75px;top:231.9px;font-size:11px;line-height:10px;color:#d2d2d2">0</div>
<div class="ab" style="left:75px;top:250.1px;font-size:11px;line-height:10px;color:#d2d2d2">5</div>
<div class="ab" style="left:75px;top:260.2px;font-size:11px;line-height:10px;color:#d2d2d2">0</div>
<div class="ab" style="left:75px;top:278.4px;font-size:11px;line-height:10px;color:#d2d2d2">6</div>
<div class="ab" style="left:75px;top:288.6px;font-size:11px;line-height:10px;color:#d2d2d2">0</div>
<div class="ab" style="left:75px;top:306.7px;font-size:11px;line-height:10px;color:#d2d2d2">7</div>
<div class="ab" style="left:75px;top:316.9px;font-size:11px;line-height:10px;color:#d2d2d2">0</div>
<div class="ab" style="left:75px;top:335.0px;font-size:11px;line-height:10px;color:#d2d2d2">8</div>
<div class="ab" style="left:75px;top:345.2px;font-size:11px;line-height:10px;color:#d2d2d2">0</div>
<div class="ab" style="left:75px;top:363.4px;font-size:11px;line-height:10px;color:#d2d2d2">9</div>
<div class="ab" style="left:75px;top:373.6px;font-size:11px;line-height:10px;color:#d2d2d2">0</div>
<div class="ab" style="left:75px;top:381.2px;font-size:11px;line-height:10px;color:#d2d2d2">1</div>
<div class="ab" style="left:75px;top:391.4px;font-size:11px;line-height:10px;color:#d2d2d2">0</div>
<div class="ab" style="left:75px;top:401.6px;font-size:11px;line-height:10px;color:#d2d2d2">0</div>
<div class="ab" style="left:75px;top:409.5px;font-size:11px;line-height:10px;color:#d2d2d2">1</div>
<div class="ab" style="left:75px;top:419.7px;font-size:11px;line-height:10px;color:#d2d2d2">1</div>
<div class="ab" style="left:75px;top:429.9px;font-size:11px;line-height:10px;color:#d2d2d2">0</div>
<div class="ab" style="left:75px;top:437.9px;font-size:11px;line-height:10px;color:#d2d2d2">1</div>
<div class="ab" style="left:75px;top:448.1px;font-size:11px;line-height:10px;color:#d2d2d2">2</div>
<div class="ab" style="left:75px;top:458.3px;font-size:11px;line-height:10px;color:#d2d2d2">0</div>
<div class="ab" style="left:75px;top:466.2px;font-size:11px;line-height:10px;color:#d2d2d2">1</div>
<div class="ab" style="left:75px;top:476.4px;font-size:11px;line-height:10px;color:#d2d2d2">3</div>
<div class="ab" style="left:75px;top:486.6px;font-size:11px;line-height:10px;color:#d2d2d2">0</div>
<div class="ab" style="left:75px;top:494.5px;font-size:11px;line-height:10px;color:#d2d2d2">1</div>
<div class="ab" style="left:75px;top:504.7px;font-size:11px;line-height:10px;color:#d2d2d2">4</div>
<div class="ab" style="left:75px;top:514.9px;font-size:11px;line-height:10px;color:#d2d2d2">0</div>
<div class="ab" style="left:75px;top:522.9px;font-size:11px;line-height:10px;color:#d2d2d2">1</div>
<div class="ab" style="left:75px;top:533.1px;font-size:11px;line-height:10px;color:#d2d2d2">5</div>
<div class="ab" style="left:75px;top:543.2px;font-size:11px;line-height:10px;color:#d2d2d2">0</div>
<div class="ab" style="left:75px;top:551.2px;font-size:11px;line-height:10px;color:#d2d2d2">1</div>
<div class="ab" style="left:75px;top:561.4px;font-size:11px;line-height:10px;color:#d2d2d2">6</div>
<div class="ab" style="left:75px;top:571.6px;font-size:11px;line-height:10px;color:#d2d2d2">0</div>
<div class="ab" style="left:75px;top:579.5px;font-size:11px;line-height:10px;color:#d2d2d2">1</div>
<div class="ab" style="left:75px;top:589.7px;font-size:11px;line-height:10px;color:#d2d2d2">7</div>
<div class="ab" style="left:75px;top:599.9px;font-size:11px;line-height:10px;color:#d2d2d2">0</div>
<div class="ab" style="left:75px;top:607.8px;font-size:11px;line-height:10px;color:#d2d2d2">1</div>
<div class="ab" style="left:75px;top:618.0px;font-size:11px;line-height:10px;color:#d2d2d2">8</div>
<div class="ab" style="left:75px;top:628.2px;font-size:11px;line-height:10px;color:#d2d2d2">0</div>
<div class="ab" style="left:75px;top:636.2px;font-size:11px;line-height:10px;color:#d2d2d2">1</div>
<div class="ab" style="left:75px;top:646.4px;font-size:11px;line-height:10px;color:#d2d2d2">9</div>
<div class="ab" style="left:75px;top:656.6px;font-size:11px;line-height:10px;color:#d2d2d2">0</div>
<div class="ab" style="left:75px;top:664.5px;font-size:11px;line-height:10px;color:#d2d2d2">2</div>
<div class="ab" style="left:75px;top:674.7px;font-size:11px;line-height:10px;color:#d2d2d2">0</div>
<div class="ab" style="left:75px;top:684.9px;font-size:11px;line-height:10px;color:#d2d2d2">0</div>
<div class="ab" style="left:75px;top:692.8px;font-size:11px;line-height:10px;color:#d2d2d2">2</div>
<div class="ab" style="left:75px;top:703.0px;font-size:11px;line-height:10px;color:#d2d2d2">1</div>
<div class="ab" style="left:75px;top:713.2px;font-size:11px;line-height:10px;color:#d2d2d2">0</div>
<div class="ab" style="left:75px;top:721.2px;font-size:11px;line-height:10px;color:#d2d2d2">2</div>
<div class="ab" style="left:75px;top:731.4px;font-size:11px;line-height:10px;color:#d2d2d2">2</div>
<div class="ab" style="left:75px;top:741.6px;font-size:11px;line-height:10px;color:#d2d2d2">0</div>
<div class="ab" style="left:75px;top:749.5px;font-size:11px;line-height:10px;color:#d2d2d2">2</div>
<div class="ab" style="left:75px;top:759.7px;font-size:11px;line-height:10px;color:#d2d2d2">3</div>
<div class="ab" style="left:75px;top:769.9px;font-size:11px;line-height:10px;color:#d2d2d2">0</div>
<div class="ab" style="left:75px;top:777.8px;font-size:11px;line-height:10px;color:#d2d2d2">2</div>
<div class="ab" style="left:75px;top:788.0px;font-size:11px;line-height:10px;color:#d2d2d2">4</div>
<div class="ab" style="left:75px;top:798.2px;font-size:11px;line-height:10px;color:#d2d2d2">0</div>
<div class="ab" style="left:75px;top:806.1px;font-size:11px;line-height:10px;color:#d2d2d2">2</div>
<div class="ab" style="left:75px;top:816.4px;font-size:11px;line-height:10px;color:#d2d2d2">5</div>
<div class="ab" style="left:75px;top:826.5px;font-size:11px;line-height:10px;color:#d2d2d2">0</div>
<div class="ab" style="left:73px;top:99px;width:10px;height:1px;background:#8c8c8c"></div>
<svg class="ab" style="left:73px;top:83px" width="10" height="16"><path d="M0 5.5 H10 M4.5 1 V15" stroke="#9a9a9a" stroke-dasharray="1 1" fill="none"/></svg>
<div class="ab" style="left:82px;top:77px;width:186px;height:56px;background:#1e1e1e;border-radius:3px 3px 0 0"></div>
<div class="ab" style="left:83px;top:77px;width:184px;height:12px;background:#343434;border-radius:3px 3px 0 0"></div>
<div class="ab" style="left:83px;top:89px;width:184px;height:43px;background:#4b4b4b;border-top:1px solid #5a5a5a;box-sizing:border-box"></div>
<svg class="ab" style="left:239px;top:80px" width="10" height="8"><path d="M4 0 L0 3.5 L4 7 Z M9 0 L5 3.5 L9 7 Z" fill="#c8c8c8"/></svg>
<svg class="ab" style="left:255px;top:80px" width="8" height="8"><path d="M1 1 L7 7 M7 1 L1 7" stroke="#d0d0d0" stroke-width="1.6"/></svg>
<div class="ab" style="left:165px;top:93px;width:1px;height:4px;background:#111"></div>
<div class="ab" style="left:167px;top:93px;width:1px;height:4px;background:#111"></div>
<div class="ab" style="left:169px;top:93px;width:1px;height:4px;background:#111"></div>
<div class="ab" style="left:171px;top:93px;width:1px;height:4px;background:#111"></div>
<div class="ab" style="left:173px;top:93px;width:1px;height:4px;background:#111"></div>
<div class="ab" style="left:175px;top:93px;width:1px;height:4px;background:#111"></div>
<div class="ab" style="left:177px;top:93px;width:1px;height:4px;background:#111"></div>
<div class="ab" style="left:179px;top:93px;width:1px;height:4px;background:#111"></div>
<div class="ab" style="left:181px;top:93px;width:1px;height:4px;background:#111"></div>
<div class="ab" style="left:183px;top:93px;width:1px;height:4px;background:#111"></div>
<svg class="ab" style="left:83px;top:100px" width="184" height="32">
<defs><linearGradient id="sg" x1="0" y1="0" x2="0" y2="1"><stop offset="0" stop-color="#7a7a7a"/><stop offset="1" stop-color="#5a5a5a"/></linearGradient></defs>
<rect x="10.5" y="11.5" width="13" height="12" fill="url(#sg)" stroke="#c4c4c4"/>
<rect x="40.5" y="11.5" width="14" height="12" rx="3" fill="url(#sg)" stroke="#c4c4c4"/>
<ellipse cx="77" cy="17.5" rx="7.5" ry="6" fill="url(#sg)" stroke="#c4c4c4"/>
<path d="M102.5 11.5 L111.5 11.5 L115 17.5 L111.5 23.5 L102.5 23.5 L99 17.5 Z" fill="url(#sg)" stroke="#c4c4c4"/>
<path d="M137 10.5 L139 15.5 L144.5 15.8 L140.3 19.2 L141.8 24.5 L137 21.5 L132.2 24.5 L133.7 19.2 L129.5 15.8 L135 15.5 Z" fill="url(#sg)" stroke="#c4c4c4"/>
<circle cx="167.5" cy="18" r="6.3" fill="#4a4a4a" stroke="#bdbdbd" stroke-width="1.3"/><circle cx="168.7" cy="16.7" r="3.6" fill="#c8c8c8"/><circle cx="175.2" cy="12.2" r="1.8" fill="#c8c8c8"/><circle cx="161" cy="23.5" r="2.4" fill="#8e8e8e"/>
</svg>
<div class="ab" style="left:82px;top:132px;width:186px;height:1px;background:#1e1e1e"></div>
<svg class="ab" style="left:0;top:0" width="72" height="600"><defs><linearGradient id="ig" x1="0" y1="0" x2="0" y2="1"><stop offset="0" stop-color="#dedede"/><stop offset="1" stop-color="#a4a4a4"/></linearGradient><linearGradient id="ig2" x1="0" y1="0" x2="0" y2="1"><stop offset="0" stop-color="#8a8a8a"/><stop offset="1" stop-color="#5e5e5e"/></linearGradient><linearGradient id="tg" x1="0" y1="0" x2="1" y2="0"><stop offset="0" stop-color="#3a3a3a"/><stop offset="1" stop-color="#e0e0e0"/></linearGradient><linearGradient id="tg2" x1="0" y1="0" x2="1" y2="0"><stop offset="0" stop-color="#fff"/><stop offset="1" stop-color="#222"/></linearGradient></defs><rect x="6" y="265" width="28" height="22" fill="#2e2e2e" stroke="#262626"/><rect x="6.5" y="289.5" width="27" height="21" fill="#5e5e5e" stroke="#2e2e2e"/><path d="M15.5 95.5 L15.5 110 L19 107 L21.5 112 L24 111 L21.5 106 L26 106 Z" fill="#2a2a2a" stroke="#c4c4c4" stroke-width="1.2"/><path d="M46 95 L46 109 L49.5 106 L52 111 L54 110 L52 105 L56 105 Z" fill="url(#ig)"/><path d="M60 114 L63 111 L63 114 Z" fill="#d8d8d8"/><path d="M17.4 118.5 L18.9 122.5 L22.4 120.5 L20.9 124.5 L24.9 126 L20.9 127.5 L22.4 131.5 L18.9 129.5 L17.4 133.5 L15.9 129.5 L12.4 131.5 L13.9 127.5 L9.9 126 L13.9 124.5 L12.4 120.5 L15.9 122.5 Z" fill="url(#ig)"/><path d="M20.5 128.5 L27.5 135.5" stroke="#c4c4c4" stroke-width="2.2" stroke-linecap="round"/><ellipse cx="50" cy="125" rx="8" ry="5" fill="none" stroke="#c4c4c4" stroke-width="1.4"/><path d="M50 122.5 L50 136 L59 131 Z" fill="url(#ig)"/><path d="M43 128 Q42 133 46 133" fill="none" stroke="#c4c4c4" stroke-width="1.2"/><rect x="5" y="140" width="60" height="1" fill="#333"/><rect x="5" y="141" width="60" height="1" fill="#555"/><path d="M22 147 L27 152 L18 161 L12 162 L13 156 Z" fill="url(#ig)"/><path d="M23 146 L25 144 L30 149 L28 151 Z" fill="url(#ig)"/><circle cx="18.5" cy="155.5" r="1.3" fill="#333"/><path d="M12.5 161.5 L18 156" stroke="#555" stroke-width="0.8"/><path d="M30 164 L33 161 L33 164 Z" fill="#d8d8d8"/><text x="43" y="160.5" font-family="Liberation Serif, serif" font-size="19" fill="url(#ig)">T</text><path d="M60 164 L63 161 L63 164 Z" fill="#d8d8d8"/><path d="M13 185 L26 171" stroke="#c4c4c4" stroke-width="1.6"/><path d="M30 188 L33 185 L33 188 Z" fill="#d8d8d8"/><ellipse cx="50" cy="177.8" rx="8" ry="5.6" fill="url(#ig2)" stroke="#c4c4c4" stroke-width="1.3"/><path d="M60 188 L63 185 L63 188 Z" fill="#d8d8d8"/><path d="M29 194 L19 203" stroke="#c4c4c4" stroke-width="2.4" stroke-linecap="round"/><path d="M19.5 201 Q15.5 202.5 15 206 Q13 208 11 209 Q17 210.5 21.5 206.5 Q22.5 204 21.5 202.5 Z" fill="url(#ig)"/><path d="M55.5 195.5 Q57.5 197.5 56 199 L46 209 L42 210 L43 206 L53 196 Q54 194.5 55.5 195.5 Z" fill="url(#ig)"/><path d="M44 205 L47 208 M51 199 L54 202" stroke="#555" stroke-width="1"/><path d="M45 203 L51 197 L53 199 L47 205 Z" fill="#777"/><path d="M60 212 L63 209 L63 212 Z" fill="#d8d8d8"/><path d="M12 222 L22 222 L22 226 L27 226 L27 233.5 L12 233.5 Z" fill="url(#ig)"/><path d="M17 227 Q19 223 23 223 Q24 227 21 228 Q19 229 17 227 Z" fill="#333"/><path d="M29.5 217.5 L22 224" stroke="#c4c4c4" stroke-width="2" stroke-linecap="round"/><path d="M42.5 227 L52 218 L59 218 L59 224 L50 233 L43 233 Z" fill="url(#ig)"/><path d="M43 227 L50 227 L59 218 M50 227 L50 233" stroke="#666" stroke-width="0.9" fill="none"/><path d="M60 235 L63 232 L63 235 Z" fill="#d8d8d8"/><rect x="5" y="238" width="60" height="1" fill="#333"/><rect x="5" y="239" width="60" height="1" fill="#555"/><path d="M14.5 248 A7 7 0 1 0 20 245.5" fill="none" stroke="#c4c4c4" stroke-width="1.6" stroke-dasharray="2.2 1.5"/><path d="M12.5 245.5 L19 243 L18.5 249 Z" fill="#c4c4c4"/><path d="M30 260 L33 257 L33 260 Z" fill="#d8d8d8"/><rect x="41.5" y="251.5" width="9" height="7" fill="none" stroke="#c4c4c4" stroke-width="1.2"/><rect x="45.5" y="245.5" width="12" height="9" fill="#555" fill-opacity="0.6" stroke="#c4c4c4" stroke-width="1.2"/><path d="M49 252 L55 247 M52 247 L55 247 L55 250" stroke="#c4c4c4" stroke-width="1" fill="none"/><path d="M60 260 L63 257 L63 260 Z" fill="#d8d8d8"/><path d="M13.5 269.5 Q15.5 267.5 17 270 Q18.5 276 22 277 Q25 277 25.5 273.5 Q29 272.5 30 277 Q28.5 275.5 27.5 277.5 Q26 282 21 282 Q15.5 281 15 274 Q14.5 271 13.5 269.5 Z" fill="url(#ig)"/><path d="M12.5 281 L17 277 L22.5 271" stroke="#c4c4c4" stroke-width="1"/><circle cx="12.5" cy="281" r="1.4" fill="#222" stroke="#c4c4c4"/><circle cx="17" cy="277" r="1.8" fill="#222" stroke="#c4c4c4" stroke-width="1.2"/><circle cx="22.5" cy="271" r="1.3" fill="#222" stroke="#c4c4c4"/><path d="M30 286 L33 283 L33 286 Z" fill="#d8d8d8"/><path d="M42 269 L42 281 L51 275 Z" fill="url(#ig)"/><rect x="47.5" y="270.5" width="10" height="9" fill="none" stroke="#c4c4c4" stroke-dasharray="1.5 1.5"/><rect x="17.5" y="295.5" width="11" height="8" fill="none" stroke="#8a8a8a"/><rect x="14.5" y="299.5" width="10" height="7" fill="#6a6a6a" stroke="#c4c4c4"/><path d="M11 298 Q11 294 15 293 L19 293 L21 299 L19 303 Q13 304 11 300 Z" fill="url(#ig)"/><path d="M17 290 Q18 289 19 290 L20 297" stroke="#c4c4c4" fill="none" stroke-width="1.2"/><path d="M30 310 L33 307 L33 310 Z" fill="#d8d8d8"/><path d="M42 292 L48 294 L58 300 L58 307 L42 307 Z" fill="#7a7a7a"/><path d="M42 292 L42 307 L58 307 M46 293 L46 307 M50 295 L50 307 M54 297 L54 307 M42 300 L58 300 M42 304 L58 304" stroke="#c4c4c4" stroke-width="1" fill="none"/><path d="M60 310 L63 307 L63 310 Z" fill="#d8d8d8"/><rect x="5" y="313" width="60" height="1" fill="#333"/><rect x="5" y="314" width="60" height="1" fill="#555"/><rect x="12.5" y="319.5" width="15" height="12" fill="#505050" stroke="#c4c4c4" stroke-width="1.2"/><path d="M13 323 Q17 321 20 324 Q24 327 27 323 M13 328 Q17 325 21 329 Q24 331 27 328 M17 320 Q19 325 16 331 M23 320 Q21 325 24 331" stroke="#c4c4c4" stroke-width="1.2" fill="none"/><rect x="42" y="320" width="16" height="12" fill="url(#tg)" stroke="#c4c4c4" stroke-width="1"/><path d="M26 341.5 Q29.5 342.5 28 346 L25.5 348.5 L21.5 344.5 Z" fill="url(#ig)"/><path d="M21 344 L26 349" stroke="#c4c4c4" stroke-width="1.5"/><path d="M22.5 347 L14.5 355 L13.5 357 L15.5 356 L23.5 348" fill="none" stroke="#c4c4c4" stroke-width="1.4"/><path d="M30 361 L33 358 L33 361 Z" fill="#d8d8d8"/><rect x="41.5" y="341.5" width="8" height="9" fill="url(#ig)"/><rect x="45.5" y="345" width="8" height="8.5" rx="2" fill="#777" stroke="#999"/><circle cx="54.5" cy="352.3" r="4.6" fill="#666" stroke="#c4c4c4" stroke-width="1.2"/><rect x="5" y="363" width="60" height="1" fill="#333"/><rect x="5" y="364" width="60" height="1" fill="#555"/><rect x="18.5" y="372.5" width="9" height="11" fill="#555" stroke="#c4c4c4"/><circle cx="23" cy="377.7" r="2.4" fill="none" stroke="#c4c4c4" stroke-width="1.2"/><rect x="20.7" y="367.6" width="4.3" height="4" fill="#c4c4c4"/><path d="M10.5 368 L20 368 M11 370 L19 370 M12 372 L17 372" stroke="#aaa" stroke-dasharray="1 1"/><path d="M30 386 L33 383 L33 386 Z" fill="#d8d8d8"/><path d="M42.5 368.5 L42.5 382.5 L58 382.5" stroke="#c4c4c4" fill="none"/><rect x="45" y="376" width="3" height="6.5" fill="none" stroke="#c4c4c4"/><rect x="50" y="371" width="3.3" height="11.5" fill="#8a8a8a" stroke="#c4c4c4"/><rect x="55.1" y="373" width="3" height="9.5" fill="none" stroke="#c4c4c4"/><path d="M60 386 L63 383 L63 386 Z" fill="#d8d8d8"/><rect x="5" y="388" width="60" height="1" fill="#333"/><rect x="5" y="389" width="60" height="1" fill="#555"/><rect x="14.5" y="397.5" width="11" height="9" fill="url(#ig2)" stroke="#c4c4c4"/><path d="M10 397.5 L14 397.5 M26 397.5 L30 397.5 M10 406.5 L14 406.5 M26 406.5 L30 406.5 M14.5 393 L14.5 397 M25.5 393 L25.5 397 M14.5 407 L14.5 411 M25.5 407 L25.5 411" stroke="#c4c4c4"/><path d="M41.8 409 L50 401.5 L53.3 400 L52 403 Z" fill="url(#ig)"/><path d="M51 402.5 L53.5 399.5 L60 395.8 L57 400 L53.5 403 Z" fill="#777" stroke="#aaa" stroke-width="0.6"/><path d="M60 411 L63 408 L63 411 Z" fill="#d8d8d8"/><path d="M12 425.5 Q13.5 424 16 426.5 L16.5 427.5 L16.5 420 Q17.5 418 19 420 L19.5 426 L19.5 418.5 Q21 416.5 22.5 418.5 L22.5 426 L22.5 419.5 Q24 417.5 25.5 419.5 L25.5 427 L25.5 422.5 Q27 421 28.5 422.5 L28.5 429 Q27.5 433.5 23.5 434 L19.5 434 Q17 433 12 427 Z" fill="url(#ig)"/><path d="M30 435 L33 432 L33 435 Z" fill="#d8d8d8"/><circle cx="48.5" cy="423.5" r="5.3" fill="#7a7a7a" stroke="#c4c4c4" stroke-width="1.8"/><path d="M52.5 427.5 L57.5 432.5" stroke="#c4c4c4" stroke-width="2.8" stroke-linecap="round"/><rect x="5" y="438" width="60" height="1" fill="#333"/><rect x="5" y="439" width="60" height="1" fill="#555"/><rect x="23.5" y="461" width="35" height="34.5" fill="#fff"/><rect x="32" y="470" width="17.5" height="16" fill="#484848" stroke="#000" stroke-width="1"/><path d="M24 495 L58 462" stroke="#f00" stroke-width="2.5"/><rect x="6" y="443" width="34" height="34" fill="#000" stroke="#fff" stroke-width="1.5"/><path d="M50 447 Q55 445 57 450" fill="none" stroke="#c4c4c4" stroke-width="1.2"/><path d="M48 445 L51 443 L51 449 Z M55 450 L60 451 L57 454 Z" fill="#c4c4c4"/><rect x="8.5" y="486.5" width="7" height="7" fill="#000" stroke="#ccc"/><rect x="5.5" y="483.5" width="7" height="7" fill="#e8e8e8" stroke="#333"/><rect x="6" y="503" width="61" height="19" fill="#3a3a3a" stroke="#2a2a2a"/><rect x="7" y="504" width="19" height="17" fill="#333"/><rect x="10" y="506" width="13" height="13" fill="#000"/><rect x="27" y="504" width="19" height="17" fill="#585858"/><rect x="30" y="506" width="13" height="13" fill="url(#tg2)" stroke="#000"/><rect x="47" y="504" width="19" height="17" fill="#585858"/><rect x="50" y="506" width="13" height="13" fill="#fff" stroke="#000"/><path d="M51 518 L62 507" stroke="#f00" stroke-width="2"/><rect x="6" y="528" width="61" height="17" fill="#3a3a3a" stroke="#2a2a2a"/><rect x="7" y="529" width="19" height="15" fill="#383838"/><circle cx="15.5" cy="536" r="4" fill="none" stroke="#bbb" stroke-width="1.3"/><rect x="16" y="536" width="5" height="5" fill="#bbb"/><rect x="27" y="529" width="19" height="15" fill="#595959"/><circle cx="35.5" cy="536" r="4.5" fill="none" stroke="#bbb" stroke-width="1.3"/><path d="M41 538 L41 543 L36 543" fill="none" stroke="#bbb" stroke-width="1.3"/><rect x="47" y="529" width="19" height="15" fill="#555"/><circle cx="56" cy="536.5" r="3.5" fill="none" stroke="#777" stroke-width="1.2"/><rect x="23.5" y="558.5" width="14" height="11" fill="#6a6a6a" stroke="#d0d0d0"/><rect x="29.5" y="554.5" width="14" height="11" fill="#707070" stroke="#d0d0d0"/><rect x="30" y="555" width="13" height="2" fill="#bbb"/></svg>
<svg class="ab" style="left:0;top:0" width="923" height="829"><clipPath id="cv"><rect x="96" y="134" width="827" height="695"/></clipPath><g clip-path="url(#cv)" fill="none" stroke-width="1"><circle cx="372.5" cy="503.5" r="141" stroke="#f2a4ac"/><circle cx="372.5" cy="503.5" r="87" stroke="#f2a4ac"/><circle cx="534.5" cy="341.5" r="141" stroke="#acacac"/><circle cx="534.5" cy="341.5" r="87" stroke="#acacac"/><circle cx="696.5" cy="503.5" r="142" stroke="#acacac"/><circle cx="696.5" cy="503.5" r="87.5" stroke="#acacac"/><circle cx="345.5" cy="392.5" r="27" stroke="#a4a4e2"/><circle cx="811.5" cy="504" r="27" stroke="#a4a4e2"/><circle cx="811.5" cy="618.5" r="27" stroke="#a4a4e2"/><path d="M746 254.5 L784 292.5 L383.5 693.5 L345.5 655.5 Z" stroke="#a8a8a8" stroke-width="0.85" shape-rendering="auto"/></g><g font-family="Liberation Serif, serif" font-size="20" fill="#000"><text x="431.6" y="294.9">1</text><text x="345.7" y="399.2">1</text><text x="390.2" y="405.1">2</text><text x="452.0" y="435.7">2</text><text x="262.8" y="476.9">1</text><text x="469.1" y="503.4">2</text><text x="655.4" y="361.9">1</text><text x="676.7" y="385.3">1</text><text x="740.7" y="416.5">1</text><text x="602.5" y="442.2">1</text><text x="520.5" y="454.4">1</text><text x="539.5" y="477.1">1</text><text x="564.7" y="494.5">1</text><text x="520.5" y="525.7">1</text><text x="419.8" y="618.9">1</text><text x="806.8" y="495.3">1</text><text x="806.8" y="627.4">1</text><text x="792.1" y="605.3" font-size="10">1</text></g><rect x="372" y="99" width="1" height="730" fill="#40ffff"/><rect x="534" y="99" width="1" height="730" fill="#40ffff"/><rect x="696" y="99" width="1" height="730" fill="#40ffff"/><rect x="784" y="99" width="1" height="730" fill="#40ffff"/><rect x="838" y="99" width="1" height="730" fill="#40ffff"/><rect x="89" y="341" width="834" height="1" fill="#40ffff"/><rect x="89" y="503" width="834" height="1" fill="#40ffff"/><rect x="89" y="645" width="834" height="1" fill="#40ffff"/><path d="M35.0 310.5 L45.4 309.0 L44.5 312.0 L147.6 343.8 L147.4 344.8 L43.7 314.5 L42.8 317.4 Z" fill="#f03434"/><defs><linearGradient id="wg" x1="0" y1="0" x2="0" y2="1"><stop offset="0" stop-color="#8fd124"/><stop offset="1" stop-color="#5aa812"/></linearGradient>
<linearGradient id="ww" x1="0" y1="0" x2="0" y2="1"><stop offset="0" stop-color="#ffffff"/><stop offset="1" stop-color="#dcdcdc"/></linearGradient></defs>
<ellipse cx="790.5" cy="806.5" rx="13" ry="11.5" fill="url(#wg)"/><path d="M782 814 L781 820 L787 816 Z" fill="#5aa812"/>
<circle cx="785.5" cy="803.5" r="1.9" fill="#333"/><circle cx="794" cy="801.5" r="1.9" fill="#333"/>
<ellipse cx="800.5" cy="812.5" rx="11" ry="9" fill="url(#ww)" stroke="#d0d0d0" stroke-width="0.6"/><path d="M806 819 L810 822 L809 817 Z" fill="#e0e0e0"/>
<circle cx="796.5" cy="811" r="1.5" fill="#333"/><circle cx="803.5" cy="810" r="1.5" fill="#333"/>
<text x="0" y="0" transform="translate(818 811) rotate(-17)" font-family="Liberation Serif, serif" font-size="22" font-weight="300" letter-spacing="0.5" fill="#111">平面之旅</text></svg>
</body></html>
